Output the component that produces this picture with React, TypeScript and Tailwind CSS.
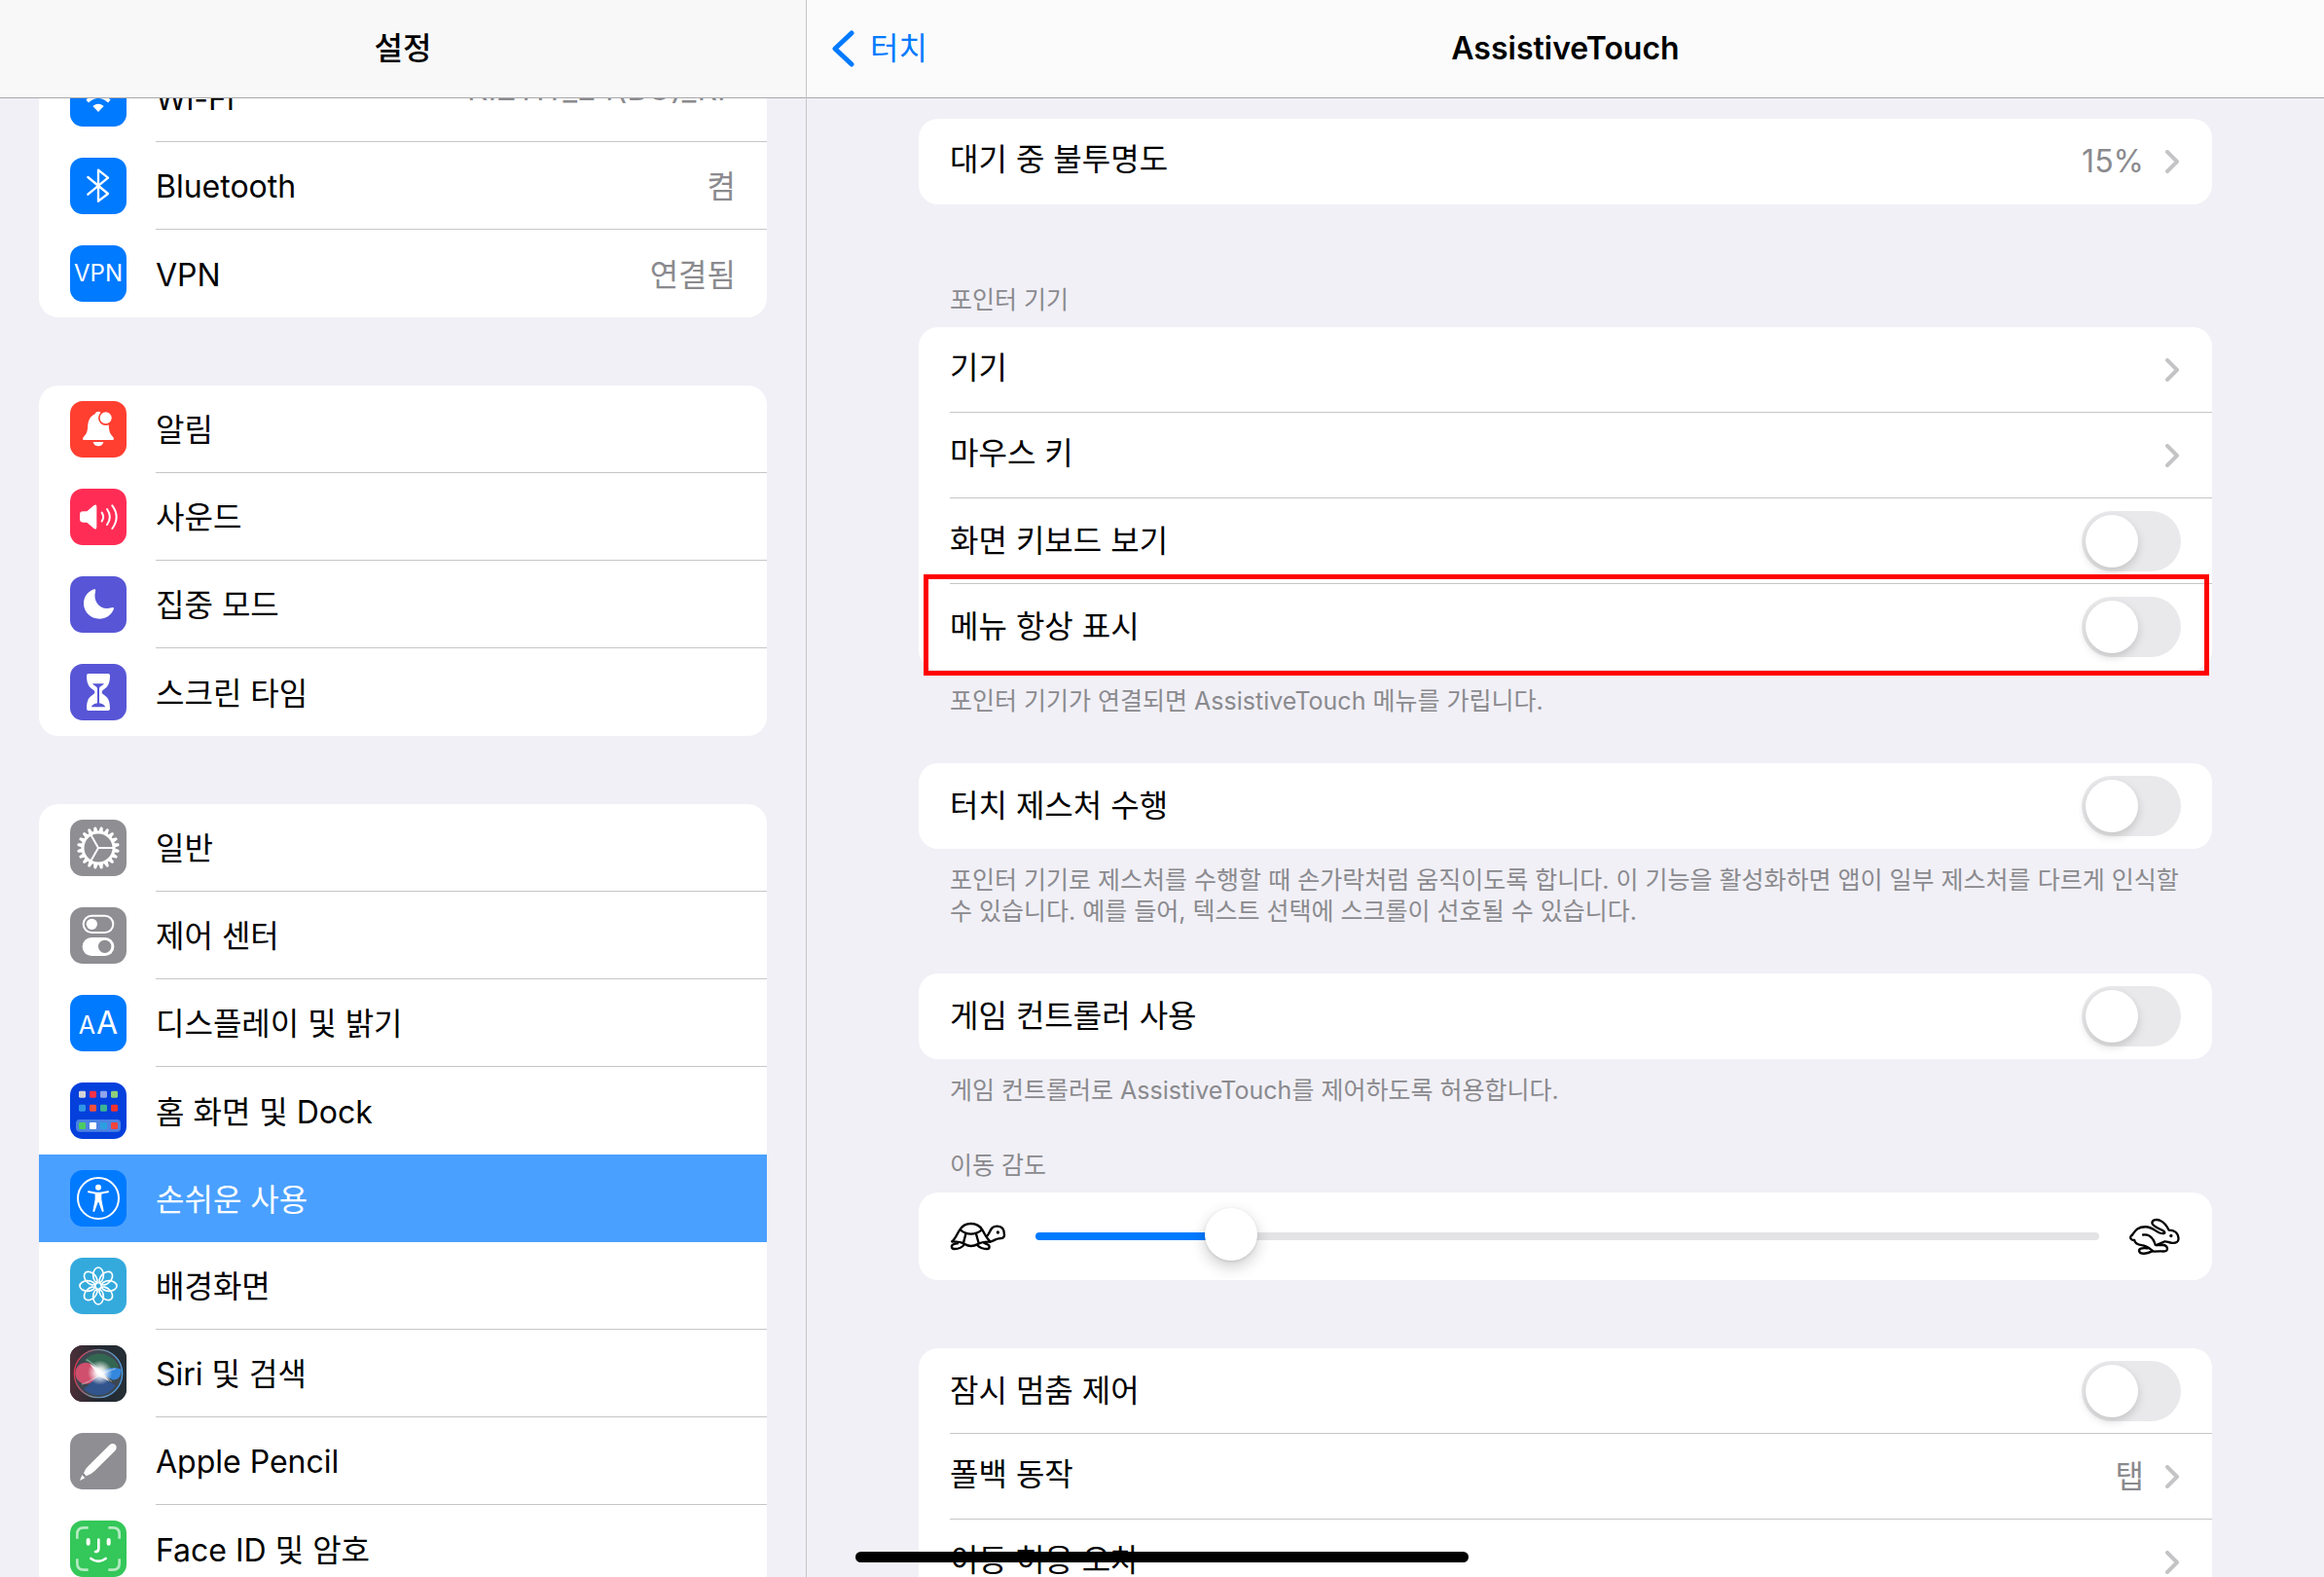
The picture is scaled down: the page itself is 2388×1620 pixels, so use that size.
import type { CSSProperties, ReactNode } from "react";
import { useState } from "react";

function Glyph({ children }: { children: ReactNode }) {
  return (
    <svg viewBox="0 0 174 174" className="size-full" fill="none" stroke="none" aria-hidden="true">
      {children}
    </svg>
  );
}

function Tile({ color, children }: { color: string; children: ReactNode }) {
  return (
    <span className={`flex size-[58px] shrink-0 items-center justify-center overflow-hidden rounded-[13px] text-white ${color}`}>
      {children}
    </span>
  );
}

const wifi = (
  <Tile color="bg-[#007aff]">
    <Glyph>
      <path d="M87 129 70 111Q87 97 104 111Z" fill="#fff" />
      <path d="M53 96Q87 66 121 96M31 74Q87 22 143 74" stroke="#fff" strokeWidth="12" />
    </Glyph>
  </Tile>
);

const bluetooth = (
  <Tile color="bg-[#007aff]">
    <Glyph>
      <path d="M55 60 117 111 87 134V38L117 62 55 113" stroke="#fff" strokeWidth="7" strokeLinejoin="round" strokeLinecap="round" />
    </Glyph>
  </Tile>
);

const vpn = (
  <Tile color="bg-[#007aff]">
    <span className="text-[24px] leading-none">VPN</span>
  </Tile>
);

const bell = (
  <Tile color="bg-[#ff3f30]">
    <Glyph>
      <path d="M43 120Q39 120 39 116C40 108 52 106 54 84C55 60 61 47 77 40C79 30 95 30 97 40C113 47 119 60 120 84C122 106 134 108 135 116Q135 120 131 120Z" fill="#fff" />
      <path d="M71 126H103C101 143 73 143 71 126Z" fill="#fff" />
      <circle cx="110" cy="52" r="23" fill="#ff3f30" />
      <circle cx="110" cy="52" r="18" fill="#fff" />
    </Glyph>
  </Tile>
);

const speaker = (
  <Tile color="bg-[#ff2d55]">
    <Glyph>
      <path d="M30 80Q30 70 40 70H52L73 52Q82 45 82 56V118Q82 129 73 122L52 104H40Q30 104 30 94Z" fill="#fff" />
      <path d="M98 74Q107 87 98 100M114 63Q131 87 114 111M130 52Q156 87 130 123" stroke="#fff" strokeWidth="6" strokeLinecap="round" />
    </Glyph>
  </Tile>
);

const moon = (
  <Tile color="bg-[#5856d6]">
    <Glyph>
      <path d="M74 40C78 38 80 42 78 47C70 76 92 108 128 97C133 95 137 97 134 103C126 121 110 131 91 131C63 131 42 110 42 84C42 63 55 46 74 40Z" fill="#fff" />
    </Glyph>
  </Tile>
);

const hourglass = (
  <Tile color="bg-[#5856d6]">
    <Glyph>
      <path d="M57 30H117Q123 30 123 36C123 62 116 72 101 81Q95 87 101 93C116 102 123 112 123 138Q123 144 117 144H57Q51 144 51 138C51 112 58 102 73 93Q79 87 73 81C58 72 51 62 51 36Q51 30 57 30Z" fill="#fff" />
      <path d="M69 61H105C100 68 91 69 90 76V121C98 122 106 127 109 133H65C68 127 76 122 84 121V76C83 69 74 68 69 61Z" fill="#5856d6" />
    </Glyph>
  </Tile>
);

const teeth = Array.from({ length: 20 }, (_, i) => i * 18 + 9);

const gear = (
  <Tile color="bg-[#8e8e93]">
    <Glyph>
      <circle cx="87" cy="87" r="48" stroke="#fff" strokeWidth="9" />
      {teeth.map((angle) => (
        <path key={angle} d="M136 80 151 83Q154 87 151 91L136 94Z" fill="#fff" transform={`rotate(${angle} 87 87)`} />
      ))}
      <path d="M87 87H136M87 87 63 45M87 87 63 129" stroke="#fff" strokeWidth="6" />
    </Glyph>
  </Tile>
);

const controls = (
  <Tile color="bg-[#8e8e93]">
    <Glyph>
      <rect x="41" y="26" width="92" height="52" rx="26" stroke="#fff" strokeWidth="6" />
      <circle cx="67" cy="52" r="17" fill="#fff" />
      <rect x="38" y="93" width="98" height="57" rx="28" fill="#fff" />
      <circle cx="107" cy="121" r="20" fill="#8e8e93" />
    </Glyph>
  </Tile>
);

const display = (
  <Tile color="bg-[#007aff]">
    <span className="flex items-baseline gap-px leading-none">
      <span className="text-[25px]">A</span>
      <span className="text-[32px]">A</span>
    </span>
  </Tile>
);

const homeApps = [
  { x: 27, y: 26, fill: "#d4d4d8" },
  { x: 60, y: 26, fill: "#f5324a" },
  { x: 93, y: 26, fill: "#8fa4ea" },
  { x: 126, y: 26, fill: "#8fcf7a" },
  { x: 27, y: 68, fill: "#2f95e6" },
  { x: 60, y: 68, fill: "#f2503c" },
  { x: 93, y: 68, fill: "#3cb592" },
  { x: 126, y: 68, fill: "#f5322c" },
  { x: 27, y: 123, fill: "#4ccb62" },
  { x: 60, y: 123, fill: "#ffffff" },
  { x: 93, y: 123, fill: "#2b9fe0" },
  { x: 126, y: 123, fill: "#f2443c" },
];

const home = (
  <Tile color="bg-[#0540dd]">
    <Glyph>
      <rect x="18" y="114" width="138" height="38" rx="12" fill="#4b82e4" />
      {homeApps.map((app) => (
        <rect key={`${app.x}-${app.y}`} x={app.x} y={app.y} width="21" height="21" rx="4" fill={app.fill} />
      ))}
    </Glyph>
  </Tile>
);

const accessibility = (
  <Tile color="bg-[#007aff]">
    <Glyph>
      <circle cx="87" cy="87" r="63" stroke="#fff" strokeWidth="6" />
      <circle cx="87" cy="53" r="9" fill="#fff" />
      <path d="M57 67 80 71H94L117 67" stroke="#fff" strokeWidth="6" strokeLinecap="round" strokeLinejoin="round" />
      <path d="M77 69H97V91L104 127Q101 131 98 127L88 99H86L76 127Q73 131 70 127L77 91Z" fill="#fff" />
    </Glyph>
  </Tile>
);

const petals = [0, 45, 90, 135, 180, 225, 270, 315];

const flower = (
  <Tile color="bg-[#34aadc]">
    <Glyph>
      {petals.map((angle) => (
        <ellipse
          key={angle}
          cx="87"
          cy="54"
          rx="16"
          ry="24"
          stroke="#fff"
          strokeWidth="5"
          transform={`rotate(${angle} 87 87)`}
        />
      ))}
    </Glyph>
  </Tile>
);

const siri = (
  <Tile color="bg-[#262b33]">
    <Glyph>
      <defs>
        <linearGradient id="siri-back" x1="0" x2="1">
          <stop offset="0" stopColor="#4d3038" />
          <stop offset="0.5" stopColor="#222830" />
          <stop offset="1" stopColor="#262f36" />
        </linearGradient>
        <radialGradient id="siri-glow">
          <stop offset="0" stopColor="#fff" />
          <stop offset="0.35" stopColor="#fff" stopOpacity="0.85" />
          <stop offset="1" stopColor="#fff" stopOpacity="0" />
        </radialGradient>
        <linearGradient id="siri-ring" x1="0" x2="1" y1="0.4" y2="0.6">
          <stop offset="0" stopColor="#e3304f" />
          <stop offset="0.4" stopColor="#7e8790" />
          <stop offset="1" stopColor="#4e9fe8" />
        </linearGradient>
      </defs>
      <rect width="174" height="174" fill="url(#siri-back)" />
      <circle cx="87" cy="87" r="74" fill="#3c4650" stroke="url(#siri-ring)" strokeWidth="4" />
      <path d="M44 48C70 12 130 20 151 66C130 74 105 72 87 80C72 66 60 54 44 48Z" fill="#2f7d52" opacity="0.6" />
      <path d="M16 84C20 54 52 44 72 64L92 84C84 106 64 124 38 118C22 110 16 98 16 84Z" fill="#cf4f6c" />
      <path d="M92 86C108 70 136 64 158 74C158 98 146 108 130 106Z" fill="#3487dd" />
      <path d="M42 134C66 118 74 100 92 90C104 104 122 112 140 124C118 160 70 164 42 134Z" fill="#2b5cae" opacity="0.65" />
      <path d="M50 44C76 56 104 90 128 112M36 120C66 112 92 84 140 72" stroke="#cfd8e0" strokeOpacity="0.5" strokeWidth="4" />
      <circle cx="92" cy="84" r="38" fill="url(#siri-glow)" />
      <path d="M60 56 93 76 122 112 88 94Z" fill="#fff" opacity="0.8" />
    </Glyph>
  </Tile>
);

const pencil = (
  <Tile color="bg-[#8e8e93]">
    <Glyph>
      <path d="M122 37C130 29 143 33 143 45Q143 51 139 55L76 117Q66 127 50 133L42 124Q46 110 57 101Z" fill="#fff" />
      <path d="M37 130 46 139 30 147Z" fill="#fff" />
    </Glyph>
  </Tile>
);

const face = (
  <Tile color="bg-[#34c759]">
    <Glyph>
      <path
        d="M22 56V42Q22 22 42 22H56M118 22H132Q152 22 152 42V56M152 118V132Q152 152 132 152H118M56 152H42Q22 152 22 132V118"
        stroke="#b5eac2"
        strokeWidth="8"
      />
      <path d="M56 60V71M119 60V71" stroke="#fff" strokeWidth="12" strokeLinecap="round" />
      <path d="M88 59V86Q88 96 78 96M64 117Q87 134 110 117" stroke="#fff" strokeWidth="8" strokeLinecap="round" />
    </Glyph>
  </Tile>
);

type Item = { label: string; icon: ReactNode; value?: string; raised?: boolean; selected?: boolean };

const groups: Item[][] = [
  [
    { label: "Wi-Fi", icon: wifi, value: "KIZTIT_24(BG)_RF", raised: true },
    { label: "Bluetooth", icon: bluetooth, value: "켬" },
    { label: "VPN", icon: vpn, value: "연결됨" },
  ],
  [
    { label: "알림", icon: bell },
    { label: "사운드", icon: speaker },
    { label: "집중 모드", icon: moon },
    { label: "스크린 타임", icon: hourglass },
  ],
  [
    { label: "일반", icon: gear },
    { label: "제어 센터", icon: controls },
    { label: "디스플레이 및 밝기", icon: display },
    { label: "홈 화면 및 Dock", icon: home },
    { label: "손쉬운 사용", icon: accessibility, selected: true },
    { label: "배경화면", icon: flower },
    { label: "Siri 및 검색", icon: siri },
    { label: "Apple Pencil", icon: pencil },
    { label: "Face ID 및 암호", icon: face },
  ],
];

function SidebarRow({ item, divider }: { item: Item; divider: boolean }) {
  return (
    <a
      href="#"
      aria-current={item.selected ? "page" : undefined}
      className={`flex h-[90px] items-center gap-[30px] pl-8 ${item.selected ? "bg-[#4aa0ff] text-white" : ""}`}
    >
      {item.icon}
      <span className={`flex h-full grow items-center justify-between pt-[3px] pr-8 ${divider ? "border-b border-[#c6c6c8]" : ""}`}>
        <span>{item.label}</span>
        {item.value && <span className={item.raised ? "pb-5 text-[#8a8a8e]" : "text-[#8a8a8e]"}>{item.value}</span>}
      </span>
    </a>
  );
}

function Chevron() {
  return (
    <svg viewBox="0 0 14 24" className="h-6 w-3.5" fill="none" stroke="#c4c4c6" strokeWidth="4" strokeLinecap="round" strokeLinejoin="round" aria-hidden="true">
      <path d="M2 2 12 12 2 22" />
    </svg>
  );
}

function Card({ children }: { children: ReactNode }) {
  return <div className="rounded-[20px] bg-white pl-8">{children}</div>;
}

function LinkRow({ label, value, last }: { label: string; value?: string; last?: boolean }) {
  return (
    <a href="#" className={`flex h-[88px] items-center justify-between pr-[34px] ${last ? "" : "border-b border-[#c6c6c8]"}`}>
      <span className="pb-1">{label}</span>
      <span className="flex items-center gap-[22px] text-[#8a8a8e]">
        {value && <span>{value}</span>}
        <Chevron />
      </span>
    </a>
  );
}

function SwitchRow({ label, last }: { label: string; last?: boolean }) {
  const [on, setOn] = useState(false);
  return (
    <label className={`flex h-[88px] items-center justify-between pr-8 ${last ? "" : "border-b border-[#c6c6c8]"}`}>
      <span>{label}</span>
      <input
        type="checkbox"
        role="switch"
        checked={on}
        onChange={(e) => setOn(e.target.checked)}
        className="flex h-[62px] w-[102px] appearance-none items-center rounded-full bg-[#e9e9eb] px-1 before:size-[54px] before:rounded-full before:bg-white before:shadow-[0_4px_10px_rgba(0,0,0,0.16)] checked:justify-end checked:bg-[#34c759]"
      />
    </label>
  );
}

function Note({ children }: { children: ReactNode }) {
  return <p className="px-8 pt-4 text-[25px] leading-8 text-[#8a8a8e]">{children}</p>;
}

function Turtle() {
  return (
    <svg viewBox="138 285 174 90" className="h-[30px] w-[58px] shrink-0" fill="none" stroke="#000" strokeWidth="7" strokeLinecap="round" strokeLinejoin="round" aria-hidden="true">
      <path d="M145 346C158 334 161 320 170 308C178 296 188 291 203 291C219 291 230 297 238 310C244 322 250 334 262 346" />
      <path d="M145 346Q172 346 184 354Q203 366 224 354Q238 346 262 347" />
      <path d="M171 311Q186 323 203 323Q221 323 236 311M187 323 180 350M219 323 227 351" />
      <path d="M251 331C264 319 261 299 284 299C300 299 306 309 306 326C306 335 299 337 289 337C279 337 273 346 261 347" />
      <path d="M182 356C176 364 165 369 152 369C142 369 141 358 149 355Q154 352 162 352" />
      <path d="M222 357C230 365 240 369 252 369C262 369 262 358 254 355L244 351" />
      <circle cx="286" cy="318" r="5" fill="#000" stroke="none" />
    </svg>
  );
}

function Rabbit() {
  return (
    <svg viewBox="261 212 162 118" className="h-[39px] w-[54px] shrink-0" fill="none" stroke="#000" strokeWidth="7" strokeLinecap="round" strokeLinejoin="round" aria-hidden="true">
      <path d="M272 266C280 256 284 240 314 240C338 240 350 262 368 261C376 260 374 256 368 252C352 244 334 238 334 228C334 217 350 216 360 221C372 226 380 238 386 250C402 250 415 258 416 276C417 288 408 291 396 290C384 289 380 284 372 286L347 297" />
      <path d="M347 297 366 296C378 297 382 303 381 310C379 319 366 316 358 316L340 317C330 312 322 299 302 297C286 295 280 290 279 281C271 282 266 277 267 272Q268 267 272 266" />
      <path d="M306 265C326 262 338 276 344 296" />
      <path d="M320 307C300 304 292 309 294 316C297 326 318 325 334 316" />
      <circle cx="393" cy="268" r="5" fill="#000" stroke="none" />
    </svg>
  );
}

export default function App() {
  const [speed, setSpeed] = useState(167);
  const fill = `${2 + (speed / 1000) * 96}%`;

  return (
    <div className="flex h-screen overflow-hidden bg-[#f1f0f6] font-[Inter,'Noto_Sans_CJK_KR',sans-serif] text-[32px] leading-10 text-black">
      <aside className="flex w-[829px] shrink-0 flex-col border-r border-[#c6c6c8]">
        <header className="z-10 flex h-[101px] shrink-0 items-center justify-center border-b border-[#a9a9ad] bg-[#f8f8f9]">
          <h1 className="text-[32px] font-medium">설정</h1>
        </header>
        <nav aria-label="설정" className="min-h-0 grow overflow-hidden px-10">
          <div className="-mt-[45px] flex flex-col gap-[70px]">
            {groups.map((items, g) => (
              <div key={g} className="overflow-hidden rounded-[20px] bg-white">
                {items.map((item, i) => (
                  <SidebarRow
                    key={item.label}
                    item={item}
                    divider={i < items.length - 1 && !item.selected && !items[i + 1].selected}
                  />
                ))}
              </div>
            ))}
          </div>
        </nav>
      </aside>

      <main className="flex min-w-0 grow flex-col">
        <header className="grid h-[101px] shrink-0 grid-cols-[1fr_auto_1fr] items-center border-b border-[#a9a9ad] bg-[#fbfbfc]">
          <button type="button" className="flex items-center gap-4 justify-self-start pl-[26px] text-[#007aff]">
            <svg viewBox="0 0 23 38" className="h-[38px] w-[23px]" fill="none" stroke="currentColor" strokeWidth="5" strokeLinecap="round" strokeLinejoin="round" aria-hidden="true">
              <path d="M20 3 3 19 20 35" />
            </svg>
            터치
          </button>
          <h2 className="text-[32px] font-semibold">AssistiveTouch</h2>
        </header>

        <div className="min-h-0 grow overflow-hidden px-[115px] pt-[21px]">
          <Card>
            <LinkRow label="대기 중 불투명도" value="15%" last />
          </Card>

          <h3 className="px-8 pt-[82px] pb-3 text-[25px] leading-8 text-[#8a8a8e]">포인터 기기</h3>
          <div className="relative">
            <Card>
              <LinkRow label="기기" />
              <LinkRow label="마우스 키" />
              <SwitchRow label="화면 키보드 보기" />
              <SwitchRow label="메뉴 항상 표시" last />
            </Card>
            <div className="pointer-events-none absolute -bottom-1.5 right-[3px] left-[5px] h-[104px] border-5 border-[#ff0000]" />
          </div>
          <Note>포인터 기기가 연결되면 AssistiveTouch 메뉴를 가립니다.</Note>

          <div className="pt-12">
            <Card>
              <SwitchRow label="터치 제스처 수행" last />
            </Card>
            <Note>
              포인터 기기로 제스처를 수행할 때 손가락처럼 움직이도록 합니다. 이 기능을 활성화하면 앱이 일부 제스처를 다르게 인식할 수 있습니다. 예를 들어, 텍스트 선택에 스크롤이 선호될 수 있습니다.
            </Note>
          </div>

          <div className="pt-12">
            <Card>
              <SwitchRow label="게임 컨트롤러 사용" last />
            </Card>
            <Note>게임 컨트롤러로 AssistiveTouch를 제어하도록 허용합니다.</Note>
          </div>

          <h3 className="px-8 pt-[45px] pb-3 text-[25px] leading-8 text-[#8a8a8e]">
            <label htmlFor="speed">이동 감도</label>
          </h3>
          <Card>
            <div className="flex h-[90px] items-center gap-[30px] pr-8">
              <Turtle />
              <input
                id="speed"
                type="range"
                min={0}
                max={1000}
                value={speed}
                onChange={(e) => setSpeed(Number(e.target.value))}
                style={{ "--fill": fill } as CSSProperties}
                className="h-[54px] min-w-0 grow appearance-none bg-transparent [&::-webkit-slider-runnable-track]:h-2 [&::-webkit-slider-runnable-track]:rounded-full [&::-webkit-slider-runnable-track]:bg-[linear-gradient(to_right,#007aff_var(--fill),#e3e3e5_var(--fill))] [&::-webkit-slider-thumb]:-mt-[25px] [&::-webkit-slider-thumb]:size-[54px] [&::-webkit-slider-thumb]:appearance-none [&::-webkit-slider-thumb]:rounded-full [&::-webkit-slider-thumb]:bg-white [&::-webkit-slider-thumb]:shadow-[0_6px_16px_rgba(0,0,0,0.2),0_1px_3px_rgba(0,0,0,0.12)]"
              />
              <Rabbit />
            </div>
          </Card>

          <div className="pt-[70px]">
            <Card>
              <SwitchRow label="잠시 멈춤 제어" />
              <LinkRow label="폴백 동작" value="탭" />
              <LinkRow label="이동 허용 오차" last />
            </Card>
          </div>
        </div>
      </main>

      <div className="fixed bottom-[15px] left-1/2 h-[11px] w-[630px] -translate-x-1/2 rounded-full bg-black" />
    </div>
  );
}
